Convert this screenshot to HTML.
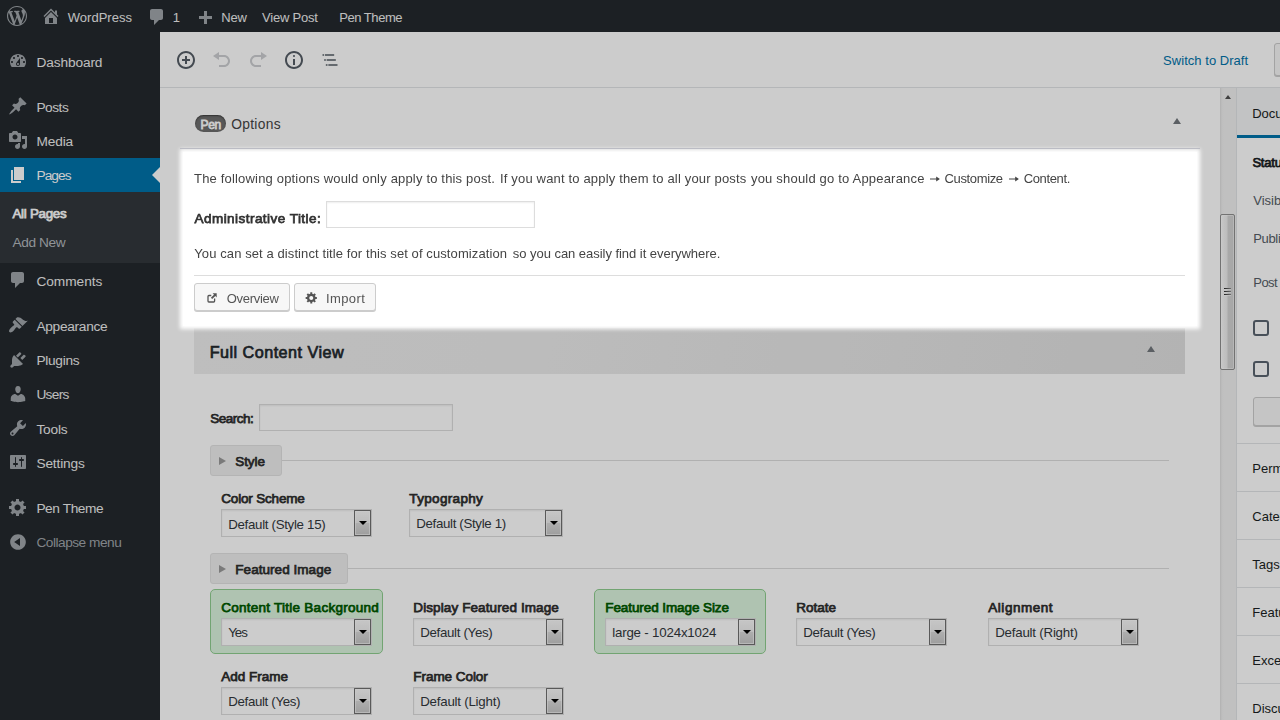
<!DOCTYPE html>
<html>
<head>
<meta charset="utf-8">
<title>Edit Page</title>
<style>
*{box-sizing:border-box;margin:0;padding:0}
html,body{width:1280px;height:720px;overflow:hidden;background:#fff;font-family:"Liberation Sans",sans-serif;font-size:14px;color:#444}
.abs{position:absolute}
.t{position:absolute;white-space:nowrap;line-height:20px}
svg{position:absolute;display:block}
/* admin bar */
#bar{position:absolute;left:0;top:0;width:1280px;height:32px;background:#23282d}
.bt{color:#eee;font-size:13px}
.bi{fill:#a0a5aa}
/* admin menu */
#menu{position:absolute;left:0;top:32px;width:160px;height:688px;background:#23282d}
.mt{color:#eee;font-size:14px}
.mi{fill:#a0a5aa}
#menu .cur{position:absolute;left:0;top:126px;width:160px;height:34px;background:#0073aa}
#menu .sub{position:absolute;left:0;top:160px;width:160px;height:71px;background:#32373c}
/* editor header */
#hdr{position:absolute;left:160px;top:32px;width:1120px;height:56px;background:#fff;border-bottom:1px solid #e2e4e7}

/* content */
#content{position:absolute;left:160px;top:88px;width:1060px;height:632px;background:#fff}
#sb{position:absolute;left:1220px;top:88px;width:16px;height:632px;background:linear-gradient(90deg,#dedede,#eee 2px,#f0f0f0 4px)}
#side{position:absolute;left:1236px;top:88px;width:44px;height:632px;background:#fff;border-left:1px solid #e2e4e7}
.st{color:#191e23;font-size:13px}
.sln{position:absolute;left:1237px;width:43px;height:1px;background:#e2e4e7}
#overlay{position:absolute;left:0;top:0;width:1280px;height:720px;background:rgba(0,0,0,.2)}
/* fields */
.lbl{position:absolute;white-space:nowrap;font-weight:bold;font-size:14px;line-height:20px;color:#32373c}
.sel{position:absolute;width:151px;height:28px;border:1px solid #ddd;background:#fff;box-shadow:inset 0 1px 2px rgba(0,0,0,.07)}
.sel span{position:absolute;left:6px;top:3px;font-size:13.5px;line-height:20px;color:#32373c;white-space:nowrap}
.sel i{position:absolute;right:0;top:0;width:17px;height:26px;border:1px solid #707070;border-radius:.5px;box-shadow:inset 0 0 0 1px rgba(255,255,255,.55);background:linear-gradient(#f8f8f8,#ececec 48%,#d9d9d9 52%,#c6c6c6)}
.sel i:after{content:"";position:absolute;left:3.5px;top:9.8px;border:4px solid transparent;border-top:4.5px solid #000;border-bottom:0}
.grn{position:absolute;height:65px;border:1px solid #8fce8f;border-radius:5px;background:#dbf4de}
.tog{position:absolute;height:31px;border:1px solid #e2e2e2;border-radius:3px;background:#eee}
.tog b{position:absolute;left:24px;top:5px;font-size:14px;line-height:20px;color:#32373c;white-space:nowrap}
.tog:before{content:"";position:absolute;left:8px;top:11px;border:4px solid transparent;border-left:7px solid #999;border-right:0}
.hl{position:absolute;height:1px;background:#ddd}
</style>
</head>
<body>
<div id="bar"></div>
<div id="menu"><div class="cur"></div><div class="sub"></div></div>
<div id="hdr"></div>
<div id="content"></div>
<div id="sb"></div>
<div id="side"></div>
<div id="L1">
<svg viewBox="0 0 20 20" style="left:7px;top:6px;width:20px;height:20px;fill:#a0a5aa"><path d="M20 10c0-5.51-4.49-10-10-10C4.48 0 0 4.49 0 10c0 5.52 4.48 10 10 10 5.51 0 10-4.48 10-10zM7.78 15.37L4.37 6.22c.55-.02 1.17-.08 1.17-.08.5-.06.44-1.13-.06-1.11 0 0-1.45.11-2.37.11-.18 0-.37 0-.58-.01C4.12 2.69 6.87 1.11 10 1.11c2.33 0 4.45.87 6.05 2.34-.68-.11-1.65.39-1.65 1.58 0 .74.45 1.36.9 2.1.35.61.55 1.36.55 2.46 0 1.49-1.4 5-1.4 5l-3.030-8.37c.54-.02.82-.17.82-.17.5-.05.44-1.25-.06-1.22 0 0-1.44.12-2.38.12-.87 0-2.33-.12-2.33-.12-.5-.03-.56 1.2-.06 1.22l.92.08 1.260 3.41zM17.41 10c.24-.64.74-1.87.43-4.25.7 1.29 1.05 2.71 1.05 4.25 0 3.29-1.73 6.24-4.4 7.78.97-2.59 1.94-5.2 2.92-7.78zM6.1 18.09C3.12 16.65 1.11 13.53 1.11 10c0-1.3.23-2.48.72-3.59C3.25 10.3 4.67 14.2 6.1 18.09zm4.03-6.63l2.580 6.98c-.86.29-1.76.45-2.71.45-.79 0-1.57-.11-2.29-.33.81-2.38 1.62-4.74 2.42-7.100z"/></svg>
<svg viewBox="0 0 20 20" style="left:41.3px;top:6px;width:20px;height:20px;fill:#a0a5aa"><path d="M16 8.5l1.53 1.53-1.06 1.06L10 4.62l-6.47 6.47-1.06-1.06L10 2.5l4 4v-2h2v4zm-6-2.46l6 5.99V18H4v-5.97zM12 17v-5H8v5h4z"/></svg>
<div class="t" style="left:67.80px;top:7.50px;font-size:13px;letter-spacing:0.009px;line-height:20px;color:#eee">WordPress</div>
<svg viewBox="0 0 20 20" style="left:147.4px;top:7px;width:20px;height:20px;fill:#a0a5aa"><path d="M5 2h9c1.1 0 2 .9 2 2v7c0 1.1-.9 2-2 2h-2l-5 5v-5H5c-1.1 0-2-.9-2-2V4c0-1.100.9-2 2-2z"/></svg>
<div class="t" style="left:172.80px;top:7.50px;font-size:13px;letter-spacing:0.000px;line-height:20px;color:#eee">1</div>
<svg viewBox="0 0 20 20" style="left:195px;top:9.3px;width:20px;height:20px;fill:#a0a5aa"><path d="M17 7v3h-5v5H9v-5H4V7h5V2h3v5h5z"/></svg>
<div class="t" style="left:221.30px;top:7.50px;font-size:13px;letter-spacing:-0.183px;line-height:20px;color:#eee">New</div>
<div class="t" style="left:262.00px;top:7.50px;font-size:13px;letter-spacing:-0.199px;line-height:20px;color:#eee">View Post</div>
<div class="t" style="left:339.20px;top:7.50px;font-size:13px;letter-spacing:-0.456px;line-height:20px;color:#eee">Pen Theme</div>
<svg viewBox="0 0 20 20" style="left:8px;top:51px;width:20px;height:20px;fill:#a0a5aa"><path d="M3.76 16h12.480c1.1-1.37 1.76-3.11 1.76-5 0-4.42-3.58-8-8-8s-8 3.58-8 8c0 1.89.66 3.63 1.760 5zM10 4c.55 0 1 .45 1 1s-.45 1-1 1-1-.45-1-1 .45-1 1-1zM6 6c.55 0 1 .45 1 1s-.45 1-1 1-1-.45-1-1 .45-1 1-1zm8 0c.55 0 1 .45 1 1s-.45 1-1 1-1-.45-1-1 .45-1 1-1zm-5.370 5.550L12 7v6c0 1.100-.9 2-2 2s-2-.9-2-2c0-.57.24-1.080.630-1.450zM4 10c.55 0 1 .45 1 1s-.45 1-1 1-1-.45-1-1 .45-1 1-1zm12 0c.55 0 1 .45 1 1s-.45 1-1 1-1-.45-1-1 .45-1 1-1zm-5 3c0-.55-.45-1-1-1s-1 .45-1 1 .45 1 1 1 1-.45 1-1z"/></svg>
<div class="t" style="left:36.40px;top:52.50px;font-size:13.7px;letter-spacing:-0.112px;line-height:20px;color:#eee">Dashboard</div>
<svg viewBox="0 0 20 20" style="left:8px;top:96px;width:20px;height:20px;fill:#a0a5aa"><path d="M10.44 3.02l1.82-1.82 6.36 6.35-1.83 1.82c-1.05-.68-2.48-.57-3.41.36l-.75.75c-.92.93-1.04 2.35-.35 3.41l-1.83 1.82-2.41-2.41-2.8 2.79c-.42.42-3.38 2.71-3.8 2.29s1.86-3.39 2.28-3.81l2.79-2.79L4.1 9.36l1.83-1.82c1.05.69 2.48.57 3.4-.36l.75-.75c.93-.92 1.05-2.35.36-3.41z"/></svg>
<div class="t" style="left:36.40px;top:97.50px;font-size:13.7px;letter-spacing:-0.475px;line-height:20px;color:#eee">Posts</div>
<svg viewBox="0 0 20 20" style="left:8px;top:130px;width:20px;height:20px;fill:#a0a5aa"><path d="M13 11V4c0-.55-.45-1-1-1h-1.670L9 1H5L3.670 3H2c-.55 0-1 .45-1 1v7c0 .55.45 1 1 1h10c.55 0 1-.45 1-1zM7 4.5c1.380 0 2.5 1.120 2.5 2.5S8.380 9.500 7 9.500 4.500 8.380 4.500 7 5.620 4.500 7 4.500zM14 6h5v10.500c0 1.380-1.120 2.500-2.500 2.500S14 17.880 14 16.500s1.120-2.500 2.500-2.500c.170 0 .340.020.5.050V9h-3V6zm-4 8.050V13h2v3.500c0 1.380-1.120 2.500-2.500 2.500S7 17.880 7 16.500 8.120 14 9.500 14c.170 0 .340.020.5.050z"/></svg>
<div class="t" style="left:36.40px;top:131.50px;font-size:13.7px;letter-spacing:-0.125px;line-height:20px;color:#eee">Media</div>
<svg viewBox="0 0 20 20" style="left:8px;top:165px;width:20px;height:20px;fill:#fff"><path d="M6 15V2h10v13H6zm-1 1h8v2H3V5h2v11z"/></svg>
<div class="t" style="left:36.40px;top:165.50px;font-size:13.7px;letter-spacing:-0.885px;line-height:20px;color:#fff">Pages</div>
<svg viewBox="0 0 20 20" style="left:8px;top:270px;width:20px;height:20px;fill:#a0a5aa"><path d="M5 2h9c1.1 0 2 .9 2 2v7c0 1.1-.9 2-2 2h-2l-5 5v-5H5c-1.1 0-2-.9-2-2V4c0-1.100.9-2 2-2z"/></svg>
<div class="t" style="left:36.40px;top:271.50px;font-size:13.7px;letter-spacing:-0.020px;line-height:20px;color:#eee">Comments</div>
<svg viewBox="0 0 20 20" style="left:8px;top:315px;width:20px;height:20px;fill:#a0a5aa"><path d="M14.48 11.060L7.410 3.990l1.500-1.500c.5-.56 2.300-.47 3.510.32 1.210.8 1.430 1.280 2.910 2.100 1.180.64 2.450 1.260 4.450.85zm-.71.71L6.700 4.700 4.930 6.470c-.39.39-.39 1.020 0 1.410l1.060 1.060c.39.39.39 1.030 0 1.420-.6.6-1.430 1.110-2.210 1.690-.35.26-.7.53-1.010.84C1.430 14.230.4 16.080 1.400 17.070c.99 1 2.840-.03 4.180-1.360.31-.31.58-.66.85-1.020.57-.78 1.080-1.610 1.690-2.210.39-.39 1.020-.39 1.410 0l1.060 1.060c.39.39 1.020.39 1.410 0z"/></svg>
<div class="t" style="left:36.40px;top:316.50px;font-size:13.7px;letter-spacing:-0.279px;line-height:20px;color:#eee">Appearance</div>
<svg viewBox="0 0 20 20" style="left:8px;top:350px;width:20px;height:20px;fill:#a0a5aa"><path d="M13.110 4.360L9.870 7.600 8 5.730l3.240-3.240c.35-.34 1.050-.2 1.560.32.52.51.66 1.210.31 1.550zm-8 1.770l.91-1.120 9.010 9.010-1.190.84c-.71.71-2.630 1.160-3.820 1.160H6.140L4.900 17.260c-.59.59-1.540.59-2.120 0-.59-.58-.59-1.530 0-2.120L4 13.900V10.100c0-1.180.44-3.270 1.110-3.970zm7.260 1.950l3.240-3.240c.34-.35 1.040-.21 1.550.31.52.51.66 1.210.31 1.550l-3.240 3.250z"/></svg>
<div class="t" style="left:36.40px;top:350.50px;font-size:13.7px;letter-spacing:-0.273px;line-height:20px;color:#eee">Plugins</div>
<svg viewBox="0 0 20 20" style="left:8px;top:384px;width:20px;height:20px;fill:#a0a5aa"><path d="M10 9.250c-2.270 0-2.730-3.440-2.730-3.440C7 4.020 7.820 2 9.970 2c2.160 0 2.980 2.020 2.710 3.810 0 0-.41 3.440-2.680 3.440zm0 2.570L12.720 10c2.390 0 4.520 2.330 4.520 4.530v2.490s-3.650 1.130-7.240 1.130c-3.650 0-7.240-1.130-7.240-1.130v-2.490c0-2.250 1.940-4.480 4.470-4.480z"/></svg>
<div class="t" style="left:36.40px;top:384.50px;font-size:13.7px;letter-spacing:-0.689px;line-height:20px;color:#eee">Users</div>
<svg viewBox="0 0 20 20" style="left:8px;top:418px;width:20px;height:20px;fill:#a0a5aa"><path d="M16.680 9.770c-1.340 1.340-3.300 1.670-4.950.99l-5.410 6.520c-.99.99-2.590.99-3.580 0s-.99-2.590 0-3.570l6.520-5.420c-.68-1.650-.35-3.610.99-4.950 1.280-1.280 3.120-1.620 4.720-1.060l-2.890 2.890 2.820 2.820 2.860-2.870c.53 1.580.18 3.390-1.080 4.650zM3.810 16.210c.4.39 1.040.39 1.430 0 .4-.4.4-1.040 0-1.430-.39-.4-1.030-.4-1.430 0-.39.39-.39 1.030 0 1.430z"/></svg>
<div class="t" style="left:36.40px;top:419.50px;font-size:13.7px;letter-spacing:-0.172px;line-height:20px;color:#eee">Tools</div>
<svg viewBox="0 0 20 20" style="left:8px;top:452px;width:20px;height:20px;fill:#a0a5aa"><path d="M18 16V4c0-.55-.45-1-1-1H3c-.55 0-1 .45-1 1v12c0 .55.45 1 1 1h14c.55 0 1-.45 1-1zM8 11h1c.55 0 1 .45 1 1s-.45 1-1 1H8v1.500c0 .28-.22.5-.5.5s-.5-.22-.5-.5V13H6c-.55 0-1-.45-1-1s.45-1 1-1h1V5.500c0-.28.22-.5.5-.5s.5.22.5.5V11zm5-2h-1c-.55 0-1-.45-1-1s.45-1 1-1h1V5.500c0-.28.22-.5.5-.5s.5.22.5.5V7h1c.55 0 1 .45 1 1s-.45 1-1 1h-1v5.500c0 .28-.22.5-.5.5s-.5-.22-.5-.5V9z"/></svg>
<div class="t" style="left:36.40px;top:453.50px;font-size:13.7px;letter-spacing:-0.132px;line-height:20px;color:#eee">Settings</div>
<svg viewBox="0 0 20 20" style="left:8px;top:497px;width:20px;height:20px;fill:#a0a5aa"><path d="M18 12h-2.180c-.17.7-.44 1.350-.81 1.930l1.540 1.540-2.100 2.100-1.540-1.540c-.58.36-1.230.63-1.910.79V19H8v-2.180c-.68-.16-1.330-.43-1.910-.79l-1.540 1.540-2.120-2.120 1.540-1.540c-.36-.58-.63-1.230-.79-1.910H1V9.030h2.170c.16-.7.44-1.350.8-1.940L2.430 5.550l2.100-2.100 1.540 1.540c.58-.37 1.240-.64 1.930-.81V2h3v2.180c.68.16 1.330.43 1.910.79l1.540-1.540 2.120 2.120-1.540 1.540c.36.59.64 1.240.8 1.940H18V12zm-8.500 1.500c1.660 0 3-1.340 3-3s-1.340-3-3-3-3 1.340-3 3 1.340 3 3 3z"/></svg>
<div class="t" style="left:36.40px;top:498.50px;font-size:13.7px;letter-spacing:-0.401px;line-height:20px;color:#eee">Pen Theme</div>
<svg viewBox="0 0 20 20" style="left:8px;top:532px;width:20px;height:20px;fill:#a0a5aa"><path d="M10 2.160c4.330 0 7.840 3.510 7.840 7.840s-3.510 7.840-7.840 7.840S2.160 14.330 2.160 10 5.670 2.160 10 2.160zm2 11.720V6.120L6.180 9.970z"/></svg>
<div class="t" style="left:36.40px;top:532.50px;font-size:13.7px;letter-spacing:-0.490px;line-height:20px;color:#a0a5aa">Collapse menu</div>
<div class="t" style="left:12.50px;top:203.50px;font-size:13.3px;letter-spacing:-0.262px;line-height:20px;-webkit-text-stroke:0.75px;color:#fff">All Pages</div>
<div class="t" style="left:12.50px;top:232.50px;font-size:13.7px;letter-spacing:-0.420px;line-height:20px;color:#b4b9be">Add New</div>
<div class="abs" style="left:152px;top:167px;border:8px solid transparent;border-right-color:#fff;border-left:0"></div>
<svg viewBox="0 0 20 20" style="left:176px;top:50px;width:20px;height:20px;fill:#555d66"><path d="M10 1c-5 0-9 4-9 9s4 9 9 9 9-4 9-9-4-9-9-9zm0 16c-3.900 0-7-3.100-7-7s3.100-7 7-7 7 3.100 7 7-3.100 7-7 7zm1-11H9v3H6v2h3v3h2v-3h3V9h-3V6z"/></svg>
<svg viewBox="0 0 20 20" style="left:212px;top:50px;width:20px;height:20px;fill:#ccced1"><path d="M12 5H7V2L1 6l6 4V7h5c2.200 0 4 1.800 4 4s-1.800 4-4 4H7v2h5c3.300 0 6-2.700 6-6s-2.700-6-6-6z"/></svg>
<svg viewBox="0 0 20 20" style="left:248px;top:50px;width:20px;height:20px;fill:#ccced1"><path d="M8 5h5V2l6 4-6 4V7H8c-2.200 0-4 1.800-4 4s1.800 4 4 4h5v2H8c-3.300 0-6-2.700-6-6s2.700-6 6-6z"/></svg>
<svg viewBox="0 0 20 20" style="left:284px;top:50px;width:20px;height:20px;fill:#555d66"><path d="M9 15h2V9H9v6zm1-10c-.5 0-1 .5-1 1s.5 1 1 1 1-.5 1-1-.5-1-1-1zm0-4c-5 0-9 4-9 9s4 9 9 9 9-4 9-9-4-9-9-9zm0 16c-3.900 0-7-3.100-7-7s3.100-7 7-7 7 3.100 7 7-3.100 7-7 7z"/></svg>
<svg viewBox="0 0 24 24" style="left:320px;top:50px;width:20px;height:20px;fill:#555d66"><path d="M5 5H3v2h2V5zm3 8h11v-2H8v2zm9-8H6v2h11V5zM7 11H5v2h2v-2zm0 8h2v-2H7v2zm3-2v2h11v-2H10z"/></svg>
<div class="t" style="left:1163.10px;top:50.50px;font-size:13px;letter-spacing:0.036px;line-height:20px;color:#0073aa">Switch to Draft</div>
<div class="abs" style="left:1274px;top:43px;width:20px;height:33px;border:1px solid #ccc;border-radius:3px;background:#f7f7f7;box-shadow:0 1px 0 #ccc"></div>
<div class="abs" style="left:195px;top:115px;width:31px;height:17px;border-radius:9px;background:#6e6e6e;box-shadow:inset 0 1px 1.5px rgba(0,0,0,.45)"></div>
<div class="t" style="left:200.60px;top:115.00px;font-size:12px;letter-spacing:-0.355px;line-height:20px;-webkit-text-stroke:0.8px;color:#fff;text-shadow:0 1px 1px rgba(0,0,0,.3)">Pen</div>
<div class="t" style="left:231.20px;top:114.50px;font-size:13.8px;letter-spacing:0.310px;line-height:20px;color:#444">Options</div>
<div class="abs" style="left:1173px;top:118px;border:4.5px solid transparent;border-bottom:6px solid #72777c;border-top:0"></div>
<div class="abs" style="left:194px;top:328px;width:991px;height:46px;background:linear-gradient(100deg,#eee,#ececec 30%,#e0e0e0)"></div>
<div class="t" style="left:209.70px;top:340.00px;font-size:16.2px;letter-spacing:0.460px;line-height:24px;-webkit-text-stroke:0.7px;color:#23282d">Full Content View</div>
<div class="abs" style="left:1147px;top:346px;border:4.5px solid transparent;border-bottom:6px solid #72777c;border-top:0"></div>
<div class="t" style="left:210.20px;top:408.50px;font-size:13.5px;letter-spacing:-0.493px;line-height:20px;-webkit-text-stroke:0.75px;color:#2e2e2e">Search:</div>
<div class="abs" style="left:259px;top:404px;width:194px;height:27px;border:1px solid #ddd;background:#fff;box-shadow:inset 0 1px 2px rgba(0,0,0,.07)"></div>
<div class="hl" style="left:282px;top:460px;width:887px"></div>
<div class="tog" style="left:210px;top:445px;width:72px"></div>
<div class="t" style="left:235.20px;top:451.50px;font-size:13.5px;letter-spacing:-0.059px;line-height:20px;-webkit-text-stroke:0.75px;color:#2e2e2e">Style</div>
<div class="t" style="left:221.30px;top:488.50px;font-size:13.5px;letter-spacing:-0.184px;line-height:20px;-webkit-text-stroke:0.75px;color:#2e2e2e">Color Scheme</div>
<div class="sel" style="left:221px;top:509px;width:151px"><i></i></div>
<div class="t" style="left:228.20px;top:514.50px;font-size:13.3px;letter-spacing:-0.308px;line-height:20px;color:#32373c">Default (Style 15)</div>
<div class="t" style="left:409.30px;top:488.50px;font-size:13.5px;letter-spacing:0.329px;line-height:20px;-webkit-text-stroke:0.75px;color:#2e2e2e">Typography</div>
<div class="sel" style="left:409px;top:509px;width:154px"><i></i></div>
<div class="t" style="left:416.20px;top:513.50px;font-size:13.3px;letter-spacing:-0.332px;line-height:20px;color:#32373c">Default (Style 1)</div>
<div class="hl" style="left:348px;top:568px;width:821px"></div>
<div class="tog" style="left:210px;top:553px;width:138px"></div>
<div class="t" style="left:235.30px;top:559.50px;font-size:13.5px;letter-spacing:0.049px;line-height:20px;-webkit-text-stroke:0.75px;color:#2e2e2e">Featured Image</div>
<div class="grn" style="left:210px;top:589px;width:173px"></div>
<div class="t" style="left:221.30px;top:597.50px;font-size:13.5px;letter-spacing:0.252px;line-height:20px;-webkit-text-stroke:0.75px;color:#005a00">Content Title Background</div>
<div class="sel" style="left:221px;top:618px;width:151px"><i></i></div>
<div class="t" style="left:228.20px;top:622.50px;font-size:13.3px;letter-spacing:-1.039px;line-height:20px;color:#32373c">Yes</div>
<div class="t" style="left:413.30px;top:597.50px;font-size:13.5px;letter-spacing:0.105px;line-height:20px;-webkit-text-stroke:0.75px;color:#2e2e2e">Display Featured Image</div>
<div class="sel" style="left:413px;top:618px;width:151px"><i></i></div>
<div class="t" style="left:420.20px;top:622.50px;font-size:13.3px;letter-spacing:-0.317px;line-height:20px;color:#32373c">Default (Yes)</div>
<div class="grn" style="left:594px;top:589px;width:172px"></div>
<div class="t" style="left:605.30px;top:597.50px;font-size:13.5px;letter-spacing:-0.092px;line-height:20px;-webkit-text-stroke:0.75px;color:#005a00">Featured Image Size</div>
<div class="sel" style="left:605px;top:618px;width:151px"><i></i></div>
<div class="t" style="left:612.20px;top:622.50px;font-size:13.3px;letter-spacing:-0.187px;line-height:20px;color:#32373c">large - 1024x1024</div>
<div class="t" style="left:796.30px;top:597.50px;font-size:13.5px;letter-spacing:-0.011px;line-height:20px;-webkit-text-stroke:0.75px;color:#2e2e2e">Rotate</div>
<div class="sel" style="left:796px;top:618px;width:151px"><i></i></div>
<div class="t" style="left:803.20px;top:622.50px;font-size:13.3px;letter-spacing:-0.317px;line-height:20px;color:#32373c">Default (Yes)</div>
<div class="t" style="left:988.30px;top:597.50px;font-size:13.5px;letter-spacing:0.537px;line-height:20px;-webkit-text-stroke:0.75px;color:#2e2e2e">Alignment</div>
<div class="sel" style="left:988px;top:618px;width:151px"><i></i></div>
<div class="t" style="left:995.20px;top:622.50px;font-size:13.3px;letter-spacing:-0.216px;line-height:20px;color:#32373c">Default (Right)</div>
<div class="t" style="left:221.30px;top:666.50px;font-size:13.5px;letter-spacing:-0.007px;line-height:20px;-webkit-text-stroke:0.75px;color:#2e2e2e">Add Frame</div>
<div class="sel" style="left:221px;top:687px;width:151px"><i></i></div>
<div class="t" style="left:228.20px;top:691.50px;font-size:13.3px;letter-spacing:-0.334px;line-height:20px;color:#32373c">Default (Yes)</div>
<div class="t" style="left:413.30px;top:666.50px;font-size:13.5px;letter-spacing:-0.049px;line-height:20px;-webkit-text-stroke:0.75px;color:#2e2e2e">Frame Color</div>
<div class="sel" style="left:413px;top:687px;width:151px"><i></i></div>
<div class="t" style="left:420.20px;top:691.50px;font-size:13.3px;letter-spacing:-0.223px;line-height:20px;color:#32373c">Default (Light)</div>
<div class="abs" style="left:1225px;top:95px;border:3.5px solid transparent;border-bottom:4px solid #505050;border-top:0"></div>
<div class="abs" style="left:1220px;top:214px;width:15px;height:156px;border:1px solid #8f8f8f;border-radius:2px;box-shadow:inset 0 0 0 1px rgba(255,255,255,.45);background:linear-gradient(90deg,#fafafa,#ececec 45%,#d4d4d4 55%,#d0d0d0)"></div>
<div class="abs" style="left:1224px;top:288px;width:7px;height:1px;background:linear-gradient(90deg,#2a2a2a,#8a8a8a)"></div>
<div class="abs" style="left:1224px;top:289px;width:7px;height:1px;background:rgba(255,255,255,.55)"></div>
<div class="abs" style="left:1224px;top:291px;width:7px;height:1px;background:linear-gradient(90deg,#2a2a2a,#8a8a8a)"></div>
<div class="abs" style="left:1224px;top:292px;width:7px;height:1px;background:rgba(255,255,255,.55)"></div>
<div class="abs" style="left:1224px;top:294px;width:7px;height:1px;background:linear-gradient(90deg,#2a2a2a,#8a8a8a)"></div>
<div class="abs" style="left:1224px;top:295px;width:7px;height:1px;background:rgba(255,255,255,.55)"></div>
<div class="abs" style="left:1237px;top:88px;width:43px;height:47px;background:#f3f4f5"></div>
<div class="abs" style="left:1237px;top:135px;width:43px;height:3px;background:#0073aa"></div>
<div class="t" style="left:1252.20px;top:103.50px;font-size:13px;letter-spacing:-0.000px;line-height:20px;color:#191e23">Document</div>
<div class="t" style="left:1252.40px;top:152.50px;font-size:13px;letter-spacing:-0.217px;line-height:20px;-webkit-text-stroke:0.75px;color:#191e23">Status &amp; visibility</div>
<div class="t" style="left:1253.30px;top:190.50px;font-size:13px;letter-spacing:-0.000px;line-height:20px;color:#555d66">Visibility</div>
<div class="t" style="left:1253.30px;top:228.50px;font-size:13px;letter-spacing:-0.355px;line-height:20px;color:#555d66">Publish</div>
<div class="t" style="left:1253.30px;top:272.50px;font-size:13px;letter-spacing:-0.567px;line-height:20px;color:#555d66">Post</div>
<div class="abs" style="left:1253px;top:320px;width:16px;height:16px;border:2px solid #5b6570;border-radius:3px;background:#fff"></div>
<div class="abs" style="left:1253px;top:361px;width:16px;height:16px;border:2px solid #5b6570;border-radius:3px;background:#fff"></div>
<div class="abs" style="left:1253px;top:397px;width:40px;height:29px;border:1px solid #ccc;border-radius:3px;background:#f7f7f7;box-shadow:0 1px 0 #ccc"></div>
<div class="sln" style="top:443px"></div>
<div class="sln" style="top:491px"></div>
<div class="sln" style="top:539px"></div>
<div class="sln" style="top:587px"></div>
<div class="sln" style="top:635px"></div>
<div class="sln" style="top:683px"></div>
<div class="t" style="left:1252.30px;top:458.50px;font-size:13px;letter-spacing:-0.000px;line-height:20px;color:#191e23">Permalink</div>
<div class="t" style="left:1252.30px;top:506.50px;font-size:13px;letter-spacing:0.000px;line-height:20px;color:#191e23">Categories</div>
<div class="t" style="left:1252.30px;top:554.50px;font-size:13px;letter-spacing:0.000px;line-height:20px;color:#191e23">Tags</div>
<div class="t" style="left:1252.30px;top:602.50px;font-size:13px;letter-spacing:0.000px;line-height:20px;color:#191e23">Featured image</div>
<div class="t" style="left:1252.30px;top:650.50px;font-size:13px;letter-spacing:-0.000px;line-height:20px;color:#191e23">Excerpt</div>
<div class="t" style="left:1252.30px;top:698.50px;font-size:13px;letter-spacing:0.000px;line-height:20px;color:#191e23">Discussion</div>
</div>
<div id="overlay"></div>
<div id="L2" style="position:absolute;left:0;top:0;width:1280px;height:720px;will-change:transform">
<div class="abs" style="left:183px;top:152px;width:1014px;height:174px;background:#fff;box-shadow:0 0 4px 3px #fff"></div>
<div class="abs" style="left:180px;top:148px;width:1020px;height:1px;background:#bbbcc4"></div>
<div class="t" style="left:194.10px;top:168.50px;font-size:13px;letter-spacing:0.175px;line-height:20px;color:#444">The following options would only apply to this post.</div>
<div class="t" style="left:500.00px;top:168.50px;font-size:13px;letter-spacing:0.168px;line-height:20px;color:#444">If you want to apply them to all your posts</div>
<div class="t" style="left:751.00px;top:168.50px;font-size:13px;letter-spacing:0.192px;line-height:20px;color:#444">you should go to Appearance</div>
<div class="t" style="left:944.60px;top:168.50px;font-size:13px;letter-spacing:-0.366px;line-height:20px;color:#444">Customize</div>
<div class="t" style="left:1023.75px;top:168.50px;font-size:13px;letter-spacing:-0.377px;line-height:20px;color:#444">Content.</div>
<svg viewBox="0 0 10 8" style="left:930px;top:175px;width:10px;height:8px"><path d="M0 4H7" fill="none" stroke="#444" stroke-width="1"/><path d="M6.2 1.6L9.9 4L6.2 6.4Z" fill="#444"/></svg>
<svg viewBox="0 0 10 8" style="left:1008.75px;top:175px;width:10px;height:8px"><path d="M0 4H7" fill="none" stroke="#444" stroke-width="1"/><path d="M6.2 1.6L9.9 4L6.2 6.4Z" fill="#444"/></svg>
<div class="t" style="left:194.50px;top:208.50px;font-size:13.5px;letter-spacing:0.460px;line-height:20px;-webkit-text-stroke:0.75px;color:#333">Administrative Title:</div>
<div class="abs" style="left:326px;top:201px;width:209px;height:27px;border:1px solid #ddd;background:#fff;box-shadow:inset 0 1px 2px rgba(0,0,0,.07)"></div>
<div class="t" style="left:194.30px;top:243.50px;font-size:13px;letter-spacing:0.093px;line-height:20px;color:#444">You can set a distinct title for this set of customization</div>
<div class="t" style="left:512.75px;top:243.50px;font-size:13px;letter-spacing:-0.036px;line-height:20px;color:#444">so you can easily find it everywhere.</div>
<div class="abs" style="left:194px;top:275px;width:991px;height:1px;background:#ddd"></div>
<div class="abs" style="left:194px;top:283px;width:96px;height:28px;border:1px solid #ccc;border-radius:3px;background:#f7f7f7;box-shadow:0 1px 0 #ccc"></div>
<div class="abs" style="left:294px;top:283px;width:82px;height:28px;border:1px solid #ccc;border-radius:3px;background:#f7f7f7;box-shadow:0 1px 0 #ccc"></div>
<svg viewBox="0 0 10 10" style="left:206.8px;top:292.6px;width:10px;height:10px"><path d="M7.6 5.6V8.1a.9.9 0 0 1-.9.9H1.9a.9.9 0 0 1-.9-.9V3.4a.9.9 0 0 1 .9-.9H4.3" fill="none" stroke="#555" stroke-width="1.3"/><path d="M5.6 0.3H9.7V4.4L8.3 3L5.2 6.1L3.9 4.8L7 1.7Z" fill="#555"/></svg>
<div class="t" style="left:226.70px;top:288.50px;font-size:13px;letter-spacing:-0.273px;line-height:20px;color:#555">Overview</div>
<svg viewBox="0 0 20 20" style="left:304.6px;top:291.1px;width:13.2px;height:13.2px;fill:#555"><path d="M18 12h-2.180c-.17.7-.44 1.350-.81 1.930l1.540 1.540-2.100 2.100-1.540-1.540c-.58.36-1.230.63-1.910.79V19H8v-2.180c-.68-.16-1.330-.43-1.910-.79l-1.540 1.540-2.120-2.120 1.540-1.540c-.36-.58-.63-1.230-.79-1.910H1V9.030h2.170c.16-.7.44-1.350.8-1.940L2.430 5.550l2.100-2.100 1.540 1.540c.58-.37 1.240-.64 1.930-.81V2h3v2.180c.68.16 1.330.43 1.910.79l1.540-1.540 2.120 2.120-1.540 1.540c.36.59.64 1.240.8 1.940H18V12zm-8.500 1.500c1.660 0 3-1.340 3-3s-1.340-3-3-3-3 1.340-3 3 1.340 3 3 3z"/></svg>
<div class="t" style="left:326.00px;top:288.50px;font-size:13px;letter-spacing:0.389px;line-height:20px;color:#555">Import</div>
</div>
</body>
</html>
